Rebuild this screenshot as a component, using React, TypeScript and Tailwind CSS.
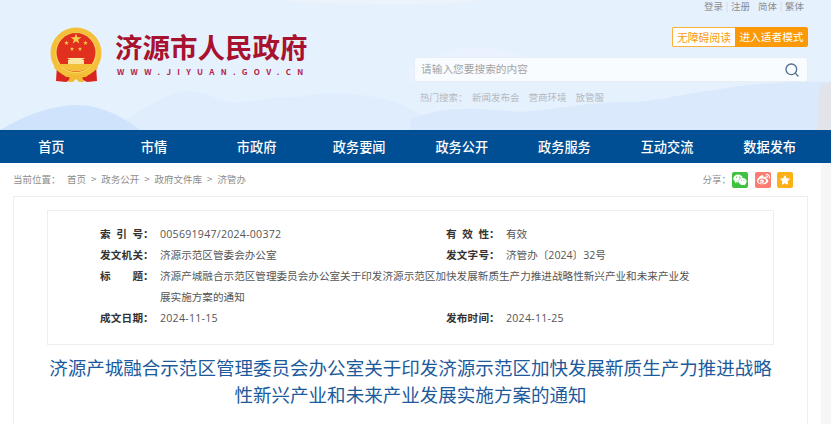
import { FaWeixin, FaWeibo, FaStar } from 'react-icons/fa';
import { Search } from 'lucide-react';

const navItems = ['首页', '市情', '市政府', '政务要闻', '政务公开', '政务服务', '互动交流', '数据发布'];
const crumbs = ['政务公开', '政府文件库', '济管办'];
const hotWords = ['新闻发布会', '营商环境', '放管服'];

const starPoints = (cx: number, cy: number, r: number) => {
    const pts: string[] = [];
    for (let i = 0; i < 10; i++) {
        const rad = i % 2 === 0 ? r : r * 0.4;
        const a = (Math.PI / 5) * i - Math.PI / 2;
        pts.push(`${(cx + rad * Math.cos(a)).toFixed(2)},${(cy + rad * Math.sin(a)).toFixed(2)}`);
    }
    return pts.join(' ');
};

const Emblem = () => (
    <svg width="53" height="56" viewBox="0 0 53 56" className="shrink-0">
        <path d="M7 38 L6 54 L16 55 L22 52 H31 L37 55 L47 54 L46 38 Z" fill="#d8261f" />
        <circle cx="26" cy="26" r="25.5" fill="#f3c03a" />
        <circle cx="26" cy="26" r="20.5" fill="#f9d867" />
        <circle cx="26" cy="25.5" r="19.5" fill="#e2301f" />
        <path d="M18 38 V33 H20 L17 31 H35 L32 33 H34 V38 Z" fill="#fbe6a0" />
        <path d="M6 36 Q26 56 46 36 L48 41 Q26 60 4 41 Z" fill="#f3c03a" />
        <path d="M7 37 H45 Q26 52 7 37 Z" fill="#f3c03a" />
        <path d="M14 48 H38 L36 50 H32 L34 55 H29 L26 52 L23 55 H18 L20 50 H16 Z" fill="#f2bb33" />
        <polygon points={starPoints(26, 12, 5.6)} fill="#f8d048" />
        <polygon points={starPoints(16.5, 16, 2.4)} fill="#f8d048" />
        <polygon points={starPoints(35.5, 16, 2.4)} fill="#f8d048" />
        <polygon points={starPoints(22, 22, 2.2)} fill="#f8d048" />
        <polygon points={starPoints(30, 22, 2.2)} fill="#f8d048" />
    </svg>
);

// background hills behind the header
const Hills = () => (
    <svg width="831" height="130" viewBox="0 0 831 130" className="absolute inset-0">
        <path d="M110 130 C140 110 170 92 185 91 C205 90 215 100 235 103 C260 100 280 96 300 97 C320 92 345 92 380 98 C400 102 415 110 420 115 L440 130 Z" fill="#dfedfd" />
        <path d="M0 130 C25 115 50 106 75 105 C100 104 125 118 140 130 Z" fill="#cfe4fc" />
        <path d="M410 120 C440 105 480 108 520 112 C570 108 600 100 640 102 C690 95 760 78 831 82 V130 H410 Z" fill="#dbe9fc" />
        <path d="M410 70 C450 42 490 40 530 60 L560 82 H410 Z" fill="#e9f2fe" />
        <path d="M280 0 H480 C470 3 440 4 400 4 C350 4 300 3 280 0 Z" fill="#ecf3fa" />
        <path d="M819 92 C821 84 826 82 831 83 V130 H817 C820 115 817 102 819 92 Z" fill="#e3e4ea" />
    </svg>
);

// label text is justified over four character widths, then the colon
const Label = ({ text }: { text: string }) => (
    <span className="flex w-[60px] shrink-0 font-bold text-[#333333]">
        <span className="flex w-[43px] justify-between">
            {text.split('').map((ch) => (
                <span key={ch}>{ch}</span>
            ))}
        </span>
        ：
    </span>
);

export default function App() {
    return (
        <div className="w-[831px] h-[424px] overflow-hidden bg-white font-['Noto_Sans_CJK_SC','Microsoft_YaHei',sans-serif]">
            {/* Header */}
            <header className="relative h-[130px] bg-[#e6f1fe]">
                <Hills />
                <div className="relative flex h-full pl-[50px] pr-[23px]">
                    <div className="flex w-[364px] items-start pt-[27px] gap-[12px]">
                        <Emblem />
                        <div className="pt-[2px]">
                            <div className="text-[27.5px] leading-[34px] font-bold text-[#a8122e] whitespace-nowrap">济源市人民政府</div>
                            <div className="mt-[4px] ml-[2px] text-[8px] leading-[10px] font-bold tracking-[6.3px] text-[#b32345] whitespace-nowrap">WWW.JIYUAN.GOV.CN</div>
                        </div>
                    </div>
                    <div className="flex flex-1 flex-col">
                        <div className="flex h-[27px] justify-end items-start pr-[4px] text-[9.5px] leading-[13px] text-[#8d8d8d]">
                            <span>登录</span>
                            <span className="w-[8px] text-center text-[#d0d4da]">|</span>
                            <span>注册</span>
                            <span className="w-[8px]" />
                            <span>简体</span>
                            <span className="w-[8px] text-center text-[#d0d4da]">|</span>
                            <span>繁体</span>
                        </div>
                        <div className="flex justify-end">
                            <div className="flex h-[20px] w-[63px] items-center justify-center rounded-l-[2px] border border-r-0 border-[#fbb03b] bg-white text-[10.8px] text-[#fb9a0c] whitespace-nowrap">
                                无障碍阅读
                            </div>
                            <div className="flex h-[20px] w-[73px] items-center justify-center rounded-r-[2px] bg-[#fb9a06] text-[10.7px] text-white whitespace-nowrap">
                                进入适者模式
                            </div>
                        </div>
                        <div className="mt-[10px] flex h-[25px] items-center justify-between rounded-[3px] border border-[#e8eef6] bg-[#f9fcff] pl-[6px] pr-[7px]">
                            <span className="text-[10.7px] text-[#a3a3a3]">请输入您要搜索的内容</span>
                            <Search size={16} strokeWidth={2} className="text-[#4f6f8f]" />
                        </div>
                        <div className="mt-[8px] flex text-[9.5px] leading-[14px] text-[#b4b9bf]">
                            <span className="ml-[6px] w-[52px]">热门搜索：</span>
                            <div className="flex gap-[9px]">
                                {hotWords.map((w) => (
                                    <span key={w}>{w}</span>
                                ))}
                            </div>
                        </div>
                    </div>
                </div>
            </header>

            {/* Nav */}
            <nav className="flex h-[33px] bg-[#004e93] pr-[10px]">
                {navItems.map((item) => (
                    <a key={item} className="flex flex-1 items-center justify-center text-[13.2px] font-medium text-white">
                        {item}
                    </a>
                ))}
            </nav>

            <div className="flex h-[261px]">
                <main className="w-[821px] bg-white">
                    {/* Breadcrumb */}
                    <div className="flex h-[33px] items-center justify-between pl-[13px] pr-[28px] text-[9.5px] text-[#8c8c8c]">
                        <div className="flex items-center">
                            <span className="w-[54px]">当前位置：</span>
                            <span>首页</span>
                            {crumbs.map((c) => (
                                <span key={c} className="flex items-center">
                                    <span className="mx-[5px]">&gt;</span>
                                    {c}
                                </span>
                            ))}
                        </div>
                        <div className="flex items-center">
                            <span className="mr-[1px]">分享：</span>
                            <span className="flex h-[16px] w-[16px] items-center justify-center rounded-[2px] bg-[#3ec13e] text-white"><FaWeixin size={14} /></span>
                            <span className="ml-[7px] flex h-[16px] w-[16px] items-center justify-center rounded-[2px] bg-[#fb7d72] text-white"><FaWeibo size={13} /></span>
                            <span className="ml-[6px] flex h-[16px] w-[16px] items-center justify-center rounded-[2px] bg-[#fdb018] text-white"><FaStar size={10} /></span>
                        </div>
                    </div>

                    {/* Article card */}
                    <div className="ml-[13px] h-[240px] w-[795px] border border-b-0 border-[#eeeeee] px-[33px] pt-[13px]">
                        <div className="h-[135px] border border-[#eeeeee] pl-[52px] pr-[80px] pt-[13px] font-['Open_Sans','Noto_Sans_CJK_SC',sans-serif] text-[10.6px] leading-[21px] text-[#555555]">
                            <div className="flex">
                                <div className="flex w-[346px]">
                                    <Label text="索引号" />
                                    <span className="tracking-[0.25px]">005691947/2024-00372</span>
                                </div>
                                <div className="flex">
                                    <Label text="有效性" />
                                    <span>有效</span>
                                </div>
                            </div>
                            <div className="flex">
                                <div className="flex w-[346px]">
                                    <Label text="发文机关" />
                                    <span>济源示范区管委会办公室</span>
                                </div>
                                <div className="flex">
                                    <Label text="发文字号" />
                                    <span>济管办〔2024〕32号</span>
                                </div>
                            </div>
                            <div className="flex">
                                <Label text="标题" />
                                <span className="w-[532px]">济源产城融合示范区管理委员会办公室关于印发济源示范区加快发展新质生产力推进战略性新兴产业和未来产业发展实施方案的通知</span>
                            </div>
                            <div className="flex">
                                <div className="flex w-[346px]">
                                    <Label text="成文日期" />
                                    <span className="tracking-[0.25px]">2024-11-15</span>
                                </div>
                                <div className="flex">
                                    <Label text="发布时间" />
                                    <span className="tracking-[0.25px]">2024-11-25</span>
                                </div>
                            </div>
                        </div>
                        <h1 className="mx-auto mt-[8px] w-[726px] text-center text-[18.55px] leading-[27px] font-normal text-[#1c5a9c]">
                            济源产城融合示范区管理委员会办公室关于印发济源示范区加快发展新质生产力推进战略性新兴产业和未来产业发展实施方案的通知
                        </h1>
                    </div>
                </main>
                <div className="flex-1 bg-[#f6f6f6]" />
            </div>
        </div>
    );
}
